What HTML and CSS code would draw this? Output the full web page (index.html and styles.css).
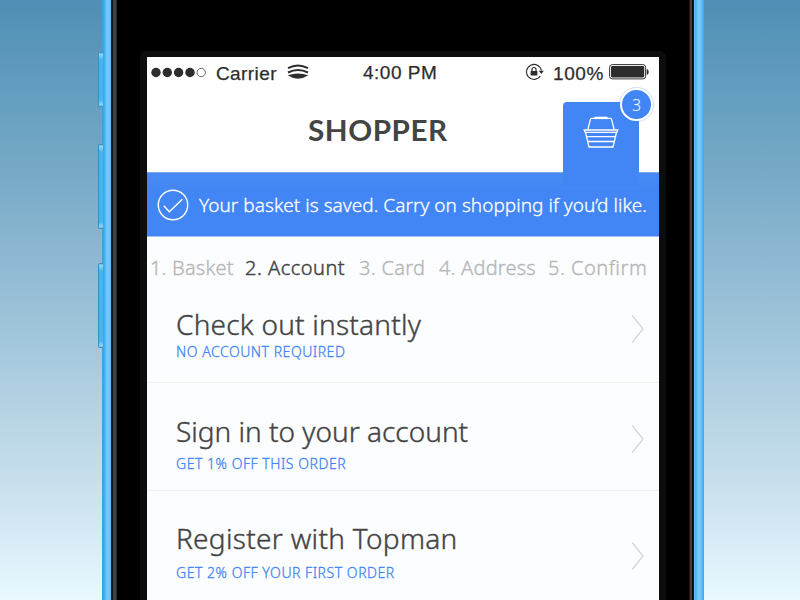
FILE: index.html
```
<!DOCTYPE html>
<html lang="en">
<head>
<meta charset="utf-8">
<title>Shopper</title>
<link rel="stylesheet" href="styles.css">
</head>
<body>
<div class="phone">
  <span class="side-button mute"></span>
  <span class="side-button volume-up"></span>
  <span class="side-button volume-down"></span>
  <div class="glass">
    <div class="bezel">
      <main class="screen">
        <div class="status">
          <div class="status-left">
            <svg class="signal" width="56" height="12" viewBox="0 0 56 12"><g fill="#2d2d2d"><circle cx="5" cy="5.5" r="4.7"/><circle cx="16.3" cy="5.5" r="4.7"/><circle cx="27.6" cy="5.5" r="4.7"/><circle cx="39" cy="5.5" r="4.7"/></g><circle cx="50.2" cy="5.5" r="4.2" fill="none" stroke="#444" stroke-width=".8"/></svg>
            <span class="carrier">Carrier</span>
            <svg class="wifi" width="22" height="16" viewBox="0 0 22 16" fill="none" stroke="#2d2d2d"><path d="M1 4.1Q11-1.2 21 4.1" stroke-width="2"/><path d="M1 8.5Q11 3.5 21 8.5" stroke-width="2"/><path d="M.7 11.3Q11 7.5 21.3 11.3Q11 18.2 .7 11.3Z" fill="#2d2d2d" stroke="none"/></svg>
          </div>
          <span class="time">4:00 PM</span>
          <div class="status-right">
            <svg class="lock" width="20" height="18" viewBox="0 0 20 18"><path d="M15.3 13A7.5 7.5 0 1 1 16.4 7.7" fill="none" stroke="#2d2d2d" stroke-width="1.1"/><path d="M13.7 7.7h5.2l-2.6 3.3z" fill="#2d2d2d"/><rect x="5.6" y="8" width="6.8" height="4.5" rx=".5" fill="#2d2d2d"/><path d="M7 8V6.5a2 2 0 0 1 4 0V8" fill="none" stroke="#2d2d2d" stroke-width="1.2"/></svg>
            <span class="percent">100%</span>
            <svg class="battery" width="41" height="16" viewBox="0 0 41 16"><rect x=".6" y=".6" width="36" height="14.3" rx="2.7" fill="#fff" stroke="#333"/><rect x="2" y="2" width="33.2" height="11.5" rx="1.4" fill="#2d2d2d"/><path d="M37.7 5.3h.7q1.3.7 1.3 2.7t-1.3 2.7h-.7z" fill="#2d2d2d"/></svg>
          </div>
        </div>
        <header class="header">
          <h1>SHOPPER</h1>
          <div class="basket-tab">
            <svg width="36" height="33" viewBox="0 0 36 33" fill="none" stroke="#fff" stroke-width="1.3"><path d="M4.9 13.5 7.4 3.4Q7.7 2.3 8.7 2.3H27.3Q28.3 2.3 28.6 3.4L31.1 13.5"/><path d="M11.5 1.9h13" stroke-width="2.4"/><path d="M1.2 14H34.8L33.8 16.3H2.2ZM2.5 16.3 6 31H30L33.5 16.3M3.5 20.6h29M4.7 25.5h26.6"/></svg>
            <span class="badge">3</span>
          </div>
        </header>
        <div class="notice">
          <svg width="32" height="32" viewBox="0 0 32 32" fill="none" stroke="#fff" stroke-width="1.4"><circle cx="16" cy="16" r="14.7"/><path d="m6.8 16.8 5.5 6L25.3 10.2"/></svg>
          <p>Your basket is saved. Carry on shopping if you’d like.</p>
        </div>
        <nav class="steps">
          <span class="s1">1. Basket</span><span class="s2 current">2. Account</span><span class="s3">3. Card</span><span class="s4">4. Address</span><span class="s5">5. Confirm</span>
        </nav>
        <section class="option first">
          <div><h2 class="t1">Check out instantly</h2><p class="p1">NO ACCOUNT REQUIRED</p></div>
          <svg class="chevron" width="14" height="30" viewBox="0 0 14 30"><path d="M1.2 1.5 12 15 1.2 28.5"/></svg>
        </section>
        <section class="option second">
          <div><h2 class="t2">Sign in to your account</h2><p class="p2">GET 1% OFF THIS ORDER</p></div>
          <svg class="chevron" width="14" height="30" viewBox="0 0 14 30"><path d="M1.2 1.5 12 15 1.2 28.5"/></svg>
        </section>
        <section class="option third">
          <div><h2 class="t3">Register with Topman</h2><p class="p3">GET 2% OFF YOUR FIRST ORDER</p></div>
          <svg class="chevron" width="14" height="30" viewBox="0 0 14 30"><path d="M1.2 1.5 12 15 1.2 28.5"/></svg>
        </section>
      </main>
    </div>
  </div>
</div>
</body>
</html>
```

FILE: styles.css
```
* { box-sizing: border-box; }
body {
  margin: 0;
  width: 800px;
  height: 600px;
  overflow: hidden;
  background: linear-gradient(#4f8fb5, #76a9c7 28%, #a8cade 60%, #c7dfed 80%, #e9f8ff);
  font-family: "Noto Sans", sans-serif;
  color: #444;
}
h1, h2, p { margin: 0; font-weight: 400; white-space: nowrap; }
svg { display: block; flex: none; }
.phone {
  position: relative;
  width: 602px;
  height: 600px;
  margin-left: 102px;
  padding: 0 10px 0 9px;
  background: linear-gradient(90deg, #37a0dd 0, #3da9e8 2px, #62c0fa 4px, #7acbff 6px, #58b9f5 9px, #58b9f5 592px, #51b5f0 594px, #83d0ff 597px, #64c1fa 599px, #3da4e8 602px);
}
.side-button {
  position: absolute;
  left: -4px;
  width: 5px;
  border-radius: 2px 0 0 2px;
  border-left: 1px solid #2b93c8;
  background: linear-gradient(#287da8 0, #91d9f9 2px, #45b5ee 8px, #45b5ee calc(100% - 7px), #91d9f9 calc(100% - 2px), #287da8 100%);
}
.mute { top: 52px; height: 55px; }
.volume-up { top: 144px; height: 85px; }
.volume-down { top: 263px; height: 85px; }
.glass {
  height: 600px;
  padding: 51px 28px 0 29px;
  background: linear-gradient(90deg, #09202c 0, #09202c 1px, #111 2px, #3d3d3d 2px, #484848 4px, #242424 6px, #000 6px, #000 578px, #3c3638 579px, #494345 581px, #080808 581px, #080808 582px, #07334a 583px);
}
.bezel { height: 549px; padding: 6px 7px 0; background: #0d0d0d; border-radius: 6px 6px 0 0; }
.screen { width: 512px; height: 543px; overflow: hidden; background: #fcfdff; }
.status {
  display: grid;
  grid-template-columns: 212px 90px 1fr;
  align-items: center;
  height: 31px;
  background: #fff;
  font: 19px "Liberation Sans", sans-serif;
  color: #2d2d2d;
  -webkit-text-stroke: .25px #2d2d2d;
}
.status-left, .status-right { display: flex; align-items: center; }
.status-left { padding-left: 4px; }
.carrier { width: 61px; margin: 3px 10px 0 9px; letter-spacing: .4px; }
.wifi { margin-bottom: 2px; }
.time { padding-left: 4px; white-space: nowrap; letter-spacing: .5px; }
.status-right { padding-left: 76px; }
.lock { margin-bottom: 2px; }
.percent { width: 51px; margin: 3px 5px 0 8px; letter-spacing: .6px; }
.battery { margin-bottom: 1px; }
.header { display: flex; height: 84px; padding-left: 161px; background: #fff; }
h1 {
  width: 255px;
  padding-top: 23px;
  font: 700 28px/38px Lato, sans-serif;
  letter-spacing: .5px;
  transform: scaleX(1.06);
  transform-origin: left;
}
.basket-tab {
  position: relative;
  display: flex;
  justify-content: center;
  width: 76px;
  height: 85px;
  margin-top: 14px;
  padding-top: 14px;
  background: #4286f5;
  border-radius: 4px;
}
.badge {
  position: absolute;
  top: -14px;
  right: -14px;
  width: 33px;
  height: 33px;
  border: 2px solid #fff;
  border-radius: 50%;
  background: #4286f5;
  box-shadow: 0 0 0 1px #4286f540;
  color: #fff;
  font-size: 16px;
  font-weight: 300;
  line-height: 31px;
  text-align: center;
}
.notice {
  display: flex;
  align-items: center;
  gap: 10px;
  height: 65px;
  padding-left: 10px;
  border-top: 1px solid #76a7f7;
  border-bottom: 1px solid #a0c2fa;
  background: linear-gradient(#4889f4, #4286f5 30%);
  color: #fff;
}
.notice p { font-size: 19px; font-weight: 300; letter-spacing: .03px; -webkit-text-stroke: .3px #fff; }
.notice svg { margin-top: 1px; }
.steps { display: flex; height: 62px; padding: 0 0 0 3px; font-size: 20px; font-weight: 300; line-height: 62px; color: #b6b7b9; white-space: nowrap; -webkit-text-stroke: .35px currentColor; letter-spacing: .3px; }
.current { color: #444; -webkit-text-stroke: .45px #444; }
.s1 { width: 95px; letter-spacing: .2px; }
.s2 { width: 114px; letter-spacing: .5px; }
.s3 { width: 80px; }
.s4 { width: 109px; letter-spacing: .2px; }
.s5 { letter-spacing: .5px; }
.option { display: flex; justify-content: space-between; padding: 0 14px 0 29px; border-bottom: 1px solid #f0f1f3; }
.option h2 { font-size: 28px; font-weight: 300; line-height: 38px; -webkit-text-stroke: .4px #444; }
.t1 { letter-spacing: .23px; }
.t3 { letter-spacing: .3px; }
.option p { font-size: 14px; font-weight: 300; line-height: 18px; color: #4286f5; letter-spacing: .53px; -webkit-text-stroke: .3px #4286f5; }
.chevron { fill: none; stroke: #d6d7d9; stroke-width: 1.4; }
.first { height: 84px; padding-top: 6px; }
.first .chevron { margin-top: 9px; }
.second { height: 108px; padding-top: 29px; }
.second p { margin-top: 5px; }
.second .chevron { margin-top: 12px; }
.third { height: 110px; border: 0; padding-top: 28px; }
.third p { margin-top: 7px; }
.third .chevron { margin-top: 22px; }
```
